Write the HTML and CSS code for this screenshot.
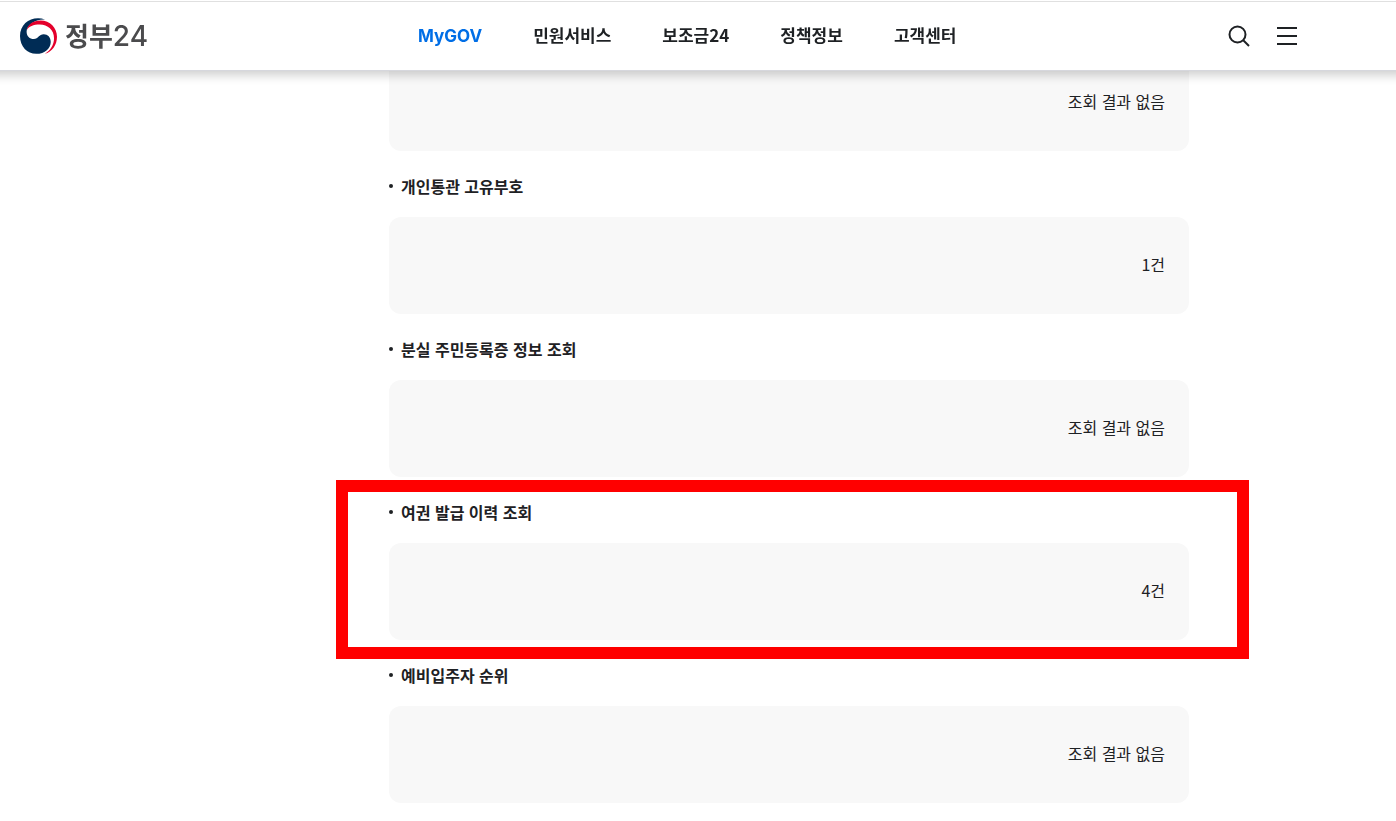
FILE: index.html
```html
<!DOCTYPE html>
<html lang="ko">
<head>
    <meta charset="UTF-8">
    <meta name="viewport" content="width=device-width, initial-scale=1.0">
    <title>정부24</title>
    <link rel="stylesheet" href="styles.css">
</head>
<body>
    <header class="header">
        <a href="#" class="logo">
            <svg class="logo-mark" viewBox="0 0 112 108" aria-hidden="true">
                <path fill="#002c55" d="M76 4C38-9 0 14 0 54c0 32 22 54 49 54 27 0 44-17 44-36 0-14-9-23-21-23-15 0-16 14-30 14-13 0-22-9-22-23C20 22 46 2 76 4Z"/>
                <path fill="#e4002b" d="M20 37C24 18 40 7 62 7c29 0 50 22 50 49 0 26-15 45-37 52 17-10 28-27 28-47 0-26-19-42-43-42-19 0-34 6-40 18Z"/>
            </svg>
            <span class="logo-text">정부<span class="logo-num">24</span></span>
        </a>
        <nav class="menu">
            <a href="#" class="active">MyGOV</a>
            <a href="#">민원서비스</a>
            <a href="#">보조금24</a>
            <a href="#">정책정보</a>
            <a href="#">고객센터</a>
        </nav>
        <div class="tools">
            <button type="button" class="icon-btn" aria-label="검색">
                <svg width="24" height="24" viewBox="0 0 24 24" fill="none" stroke="#1e2124" stroke-width="2">
                    <circle cx="10.5" cy="10.5" r="8"/>
                    <path d="M16 16l6 6"/>
                </svg>
            </button>
            <button type="button" class="icon-btn" aria-label="전체메뉴">
                <svg width="24" height="24" viewBox="0 0 24 24" fill="none" stroke="#1e2124" stroke-width="2">
                    <path d="M2 4h20M2 12h20M2 20h20"/>
                </svg>
            </button>
        </div>
    </header>

    <main class="content">
        <section class="item">
            <div class="card">조회 결과 없음</div>
        </section>
        <section class="item">
            <h2>개인통관 고유부호</h2>
            <div class="card">1건</div>
        </section>
        <section class="item">
            <h2>분실 주민등록증 정보 조회</h2>
            <div class="card">조회 결과 없음</div>
        </section>
        <section class="item highlight">
            <h2>여권 발급 이력 조회</h2>
            <div class="card">4건</div>
        </section>
        <section class="item">
            <h2>예비입주자 순위</h2>
            <div class="card">조회 결과 없음</div>
        </section>
    </main>
</body>
</html>
```
FILE: styles.css
```css
* {
    box-sizing: border-box;
}

body {
    margin: 0;
    background: #fff;
    color: #1e2124;
    font-family: "Noto Sans CJK KR", sans-serif;
    font-size: 16px;
    line-height: 24px;
}

a {
    color: inherit;
    text-decoration: none;
}

/* header */
.header {
    position: fixed;
    top: 0;
    left: 0;
    right: 0;
    z-index: 10;
    display: grid;
    grid-template-columns: 398px 1fr auto;
    align-items: center;
    height: 71px;
    padding: 2px 97px 0 20px;
    background: linear-gradient(#fff 1px, #e0e0e0 1px, #e0e0e0 2px, #fff 2px);
    border-bottom: 1px solid #d6d7dd;
    box-shadow: 0 -8px 10px 12px rgba(0, 0, 0, 0.2);
}

.logo {
    display: flex;
    align-items: center;
    gap: 8px;
}

.logo-mark {
    width: 37px;
    height: 36px;
}

.logo-text {
    color: #4b4b4d;
    font-size: 26px;
    font-weight: bold;
    line-height: 34px;
    padding-bottom: 2px;
}

.logo-num {
    font-family: Inter, sans-serif;
    font-size: 28px;
    font-weight: 500;
    line-height: 32px;
}

.menu {
    display: flex;
    align-items: baseline;
    gap: 51px;
    font-size: 17px;
    font-weight: bold;
    line-height: 24px;
    padding-bottom: 2px;
    white-space: nowrap;
}

.menu .active {
    color: #006ee6;
    font-family: Inter, sans-serif;
}

.tools {
    display: flex;
    gap: 24px;
}

.icon-btn {
    display: flex;
    padding: 0;
    border: none;
    background: none;
    cursor: pointer;
}

/* result list */
.content {
    padding: 54px 207px 18px 389px;
}

.item {
    position: relative;
}

.item h2 {
    display: flex;
    align-items: center;
    gap: 8px;
    margin: 0;
    padding: 23px 0 19px;
    font-size: 16px;
    line-height: 24px;
}

.item h2::before {
    content: "";
    width: 4px;
    height: 4px;
    border-radius: 50%;
    background: #1e2124;
}

.card {
    padding: 35px 24px 38px;
    border-radius: 12px;
    background: #f8f8f8;
    text-align: right;
}

.highlight::after {
    content: "";
    position: absolute;
    top: 3px;
    right: -60px;
    bottom: -19px;
    left: -53px;
    border: 12px solid #f00;
    pointer-events: none;
}
```
